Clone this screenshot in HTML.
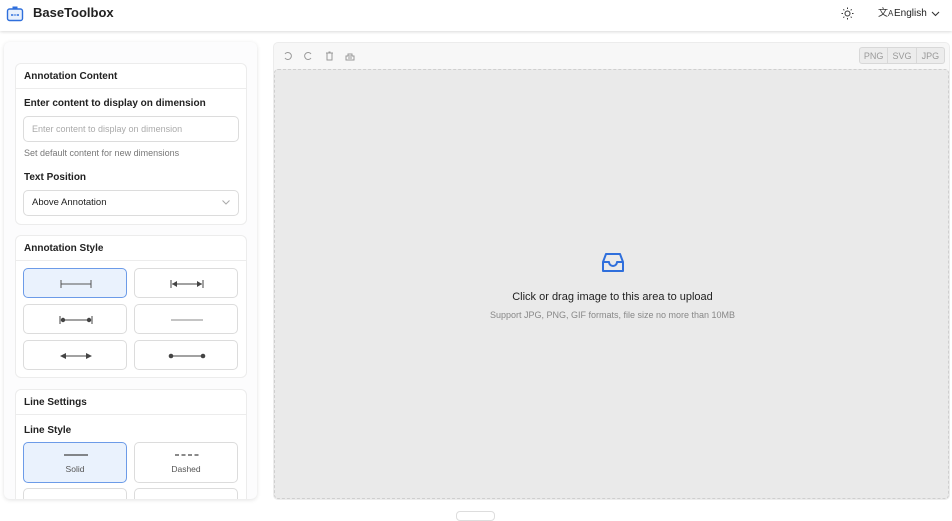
<!DOCTYPE html>
<html><head><style>
*{box-sizing:border-box;margin:0;padding:0}
body{width:952px;height:514px;overflow:hidden;background:#fff;font-family:"Liberation Sans",sans-serif;color:#222;position:relative}
.hdr{position:absolute;left:0;top:0;width:952px;height:31px;background:#fff;box-shadow:0 1px 3px rgba(0,0,0,.15)}
.abs{position:absolute;line-height:1.15}
.left{left:4px;top:42px;width:253px;height:457px;background:#fcfcfd;border-radius:6px;box-shadow:0 1px 4px rgba(0,0,0,.12);overflow:hidden}
.card{position:absolute;left:11px;width:232px;background:#fff;border:1px solid #ececec;border-radius:6px;overflow:hidden}
.ch{height:25px;border-bottom:1px solid #ececec;font-size:10px;font-weight:bold;padding:7px 0 0 8px}
.lbl{position:absolute;left:8px;font-size:10px;font-weight:bold}
.btn{position:absolute;width:104px;height:30px;border:1px solid #dcdcdc;border-radius:5px;background:#fff}
.btn.sel{background:#eaf2fd;border-color:#6c9be8}
.btn svg{position:absolute;left:0;top:0}
</style></head><body>
<div class="hdr">
<svg class="abs" style="left:6px;top:5px" width="18" height="17" viewBox="0 0 18 17"><rect x="1.5" y="4" width="15" height="11.5" rx="2" fill="#e8f0fc" stroke="#2f6fdc" stroke-width="1.4"/><rect x="6.5" y="1.5" width="5" height="2.5" fill="#2f6fdc"/><circle cx="6" cy="10" r="1" fill="#2f6fdc"/><circle cx="12" cy="10" r="1" fill="#2f6fdc"/><path d="M7.5 10h3" stroke="#2f6fdc"/></svg>
<div class="abs" style="left:33px;top:6px;font-size:13px;font-weight:bold">BaseToolbox</div>
<svg class="abs" style="left:841px;top:7px" width="13" height="13" viewBox="0 0 13 13" fill="none" stroke="#333" stroke-width="1"><circle cx="6.5" cy="6.5" r="2.5"/><path d="M6.5 0.5v1.5M6.5 11v1.5M0.5 6.5h1.5M11 6.5h1.5M2.3 2.3l1 1M9.7 9.7l1 1M2.3 10.7l1-1M9.7 3.3l1-1"/></svg>
<div class="abs" style="left:878px;top:8px;font-size:10px;color:#333">文<span style="font-size:8px">A</span></div>
<div class="abs" style="left:894px;top:8px;font-size:10px;color:#222">English</div>
<svg class="abs" style="left:931px;top:11px" width="9" height="6" viewBox="0 0 9 6"><path d="M1 1l3.5 3.5L8 1" fill="none" stroke="#333" stroke-width="1.1"/></svg>
</div>

<div class="abs left">
<div class="card" style="top:21px;height:162px">
<div class="ch">Annotation Content</div>
<div class="lbl" style="top:34px">Enter content to display on dimension</div>
<div class="abs" style="left:7px;top:52px;width:216px;height:26px;border:1px solid #dcdcdc;border-radius:5px;font-size:9px;color:#aaa;padding:7px 0 0 8px">Enter content to display on dimension</div>
<div class="abs" style="left:8px;top:84px;font-size:9px;color:#777">Set default content for new dimensions</div>
<div class="lbl" style="top:108px">Text Position</div>
<div class="abs" style="left:7px;top:126px;width:216px;height:26px;border:1px solid #dcdcdc;border-radius:5px;font-size:9.5px;color:#222;padding:7px 0 0 8px">Above Annotation</div>
<svg class="abs" style="left:206px;top:136px" width="8" height="5" viewBox="0 0 8 5"><path d="M.5.5l3.5 3.5L7.5.5" fill="none" stroke="#aaa"/></svg>
</div>
<div class="card" style="top:193px;height:143px">
<div class="ch">Annotation Style</div>
<div class="btn sel" style="left:7px;top:32px"><svg width="104" height="30"><path d="M37 11v8M37 15h30M67 11v8" stroke="#555" stroke-width="1"/></svg></div>
<div class="btn" style="left:118px;top:32px"><svg width="104" height="30"><path d="M36 11v8M68 11v8M37 15h30" stroke="#444"/><path d="M37 15l5-3v6zM67 15l-5-3v6z" fill="#444"/></svg></div>
<div class="btn" style="left:7px;top:68px"><svg width="104" height="30"><path d="M36 11v8M68 11v8M37 15h30" stroke="#444"/><circle cx="39" cy="15" r="2.2" fill="#444"/><circle cx="65" cy="15" r="2.2" fill="#444"/></svg></div>
<div class="btn" style="left:118px;top:68px"><svg width="104" height="30"><path d="M36 15h32" stroke="#888"/></svg></div>
<div class="btn" style="left:7px;top:104px"><svg width="104" height="30"><path d="M37 15h30" stroke="#444"/><path d="M36 15l6-3v6zM68 15l-6-3v6z" fill="#444"/></svg></div>
<div class="btn" style="left:118px;top:104px"><svg width="104" height="30"><path d="M36 15h32" stroke="#444"/><circle cx="36" cy="15" r="2.3" fill="#444"/><circle cx="68" cy="15" r="2.3" fill="#444"/></svg></div>
</div>
<div class="card" style="top:347px;height:130px">
<div class="ch">Line Settings</div>
<div class="lbl" style="top:35px">Line Style</div>
<div class="btn sel" style="left:7px;top:52px;height:41px"><svg width="104" height="41"><path d="M40 12h24" stroke="#444" stroke-width="1.2"/></svg><div class="abs" style="left:0;width:102px;top:22px;text-align:center;font-size:8.5px;color:#555">Solid</div></div>
<div class="btn" style="left:118px;top:52px;height:41px"><svg width="104" height="41"><path d="M40 12h24" stroke="#444" stroke-width="1.2" stroke-dasharray="4 2.5"/></svg><div class="abs" style="left:0;width:102px;top:22px;text-align:center;font-size:8.5px;color:#555">Dashed</div></div>
<div class="btn" style="left:7px;top:98px"></div>
<div class="btn" style="left:118px;top:98px"></div>
</div>
</div>

<div class="abs" style="left:273px;top:42px;width:677px;height:458px;background:#f7f7f7;border-radius:5px;border:1px solid #ececec">
<svg class="abs" style="left:8px;top:7px" width="80" height="12" viewBox="0 0 80 12" fill="none" stroke="#999" stroke-width="1"><path d="M3 4a3.5 3.5 0 1 1 0 4"/><path d="M29 4a3.5 3.5 0 1 0 0 4"/><path d="M44 3h7M45 3v7h5V3M46.5 2h2"/><path d="M64 10h8V6h-8zM66 6V4h4v2M66 8h4"/></svg>
<div class="abs" style="left:585px;top:4px;width:86px;height:17px;border:1px solid #d8d8d8;border-radius:3px;background:#ececec;display:flex;font-size:9px;color:#999">
<div style="flex:1;text-align:center;padding-top:3px;border-right:1px solid #d8d8d8">PNG</div><div style="flex:1;text-align:center;padding-top:3px;border-right:1px solid #d8d8d8">SVG</div><div style="flex:1;text-align:center;padding-top:3px">JPG</div></div>
<div class="abs" style="left:0;top:26px;width:675px;height:430px;background:#eaeaea;border:1px dashed #cfcfcf;border-radius:4px">
<svg class="abs" style="left:325px;top:180px" width="26" height="26" viewBox="0 0 26 26" fill="none" stroke="#2f6fdc" stroke-width="2" stroke-linejoin="round"><path d="M3 12l3-8h14l3 8v9H3z"/><path d="M3 12h6a4 4 0 0 0 8 0h6"/></svg>
<div class="abs" style="left:0;width:675px;top:221px;text-align:center;font-size:11px;color:#222">Click or drag image to this area to upload</div>
<div class="abs" style="left:0;width:675px;top:240px;text-align:center;font-size:9px;color:#888">Support JPG, PNG, GIF formats, file size no more than 10MB</div>
</div>
</div>
<div class="abs" style="left:456px;top:511px;width:39px;height:10px;border:1px solid #ddd;border-radius:4px;background:#fff"></div>
</body></html>
